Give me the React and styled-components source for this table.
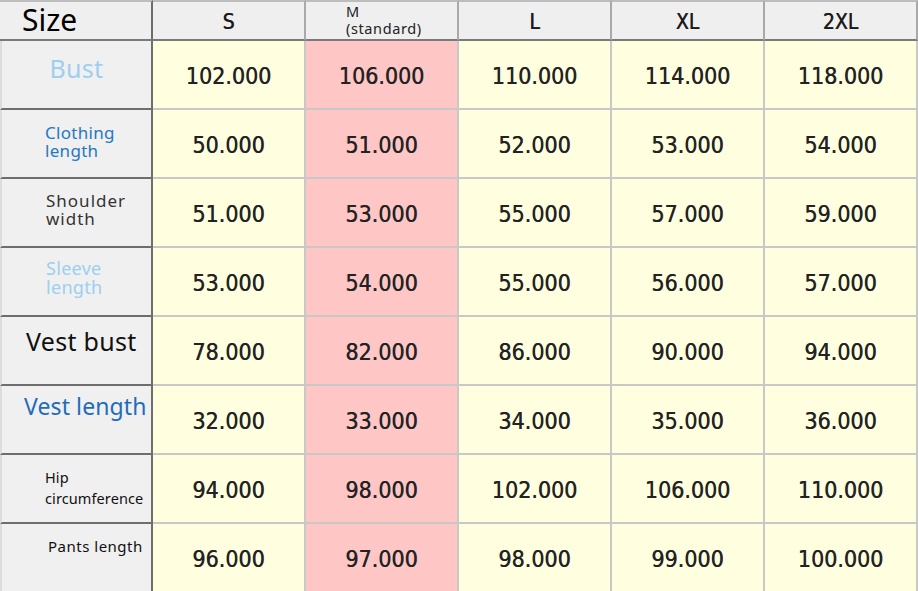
import React from "react";
import styled, { createGlobalStyle } from "styled-components";

const GlobalStyle = createGlobalStyle`
  html, body {
    margin: 0;
    padding: 0;
    background: #ffffff;
  }
  * {
    box-sizing: border-box;
  }
`;

const SIZES = ["S", "M", "L", "XL", "2XL"];

const ROWS = [
  { label: "Bust", tone: "sky", size: 25, align: "center", pad: "0 0 0 0", top: 14, values: ["102.000", "106.000", "110.000", "114.000", "118.000"] },
  { label: "Clothing\nlength", tone: "blue", size: 17, pad: "0 0 0 43px", top: 14, values: ["50.000", "51.000", "52.000", "53.000", "54.000"] },
  { label: "Shoulder\nwidth", tone: "dark", size: 17, pad: "0 0 0 44px", top: 13, spacing: 1, values: ["51.000", "53.000", "55.000", "57.000", "59.000"] },
  { label: "Sleeve\nlength", tone: "sky", size: 18, pad: "0 0 0 44px", top: 11, values: ["53.000", "54.000", "55.000", "56.000", "57.000"] },
  { label: "Vest bust", tone: "black", size: 25, pad: "0 0 0 24px", top: 11, values: ["78.000", "82.000", "86.000", "90.000", "94.000"] },
  { label: "Vest length", tone: "royal", size: 23, pad: "0 0 0 22px", top: 8, spacing: 0.1, values: ["32.000", "33.000", "34.000", "35.000", "36.000"] },
  { label: "Hip\ncircumference", tone: "black", size: 14.5, lh: 21, pad: "0 0 0 43px", top: 12, spacing: 0.1, values: ["94.000", "98.000", "102.000", "106.000", "110.000"] },
  { label: "Pants length", tone: "black", size: 15, pad: "0 0 0 46px", top: 14, spacing: 0.5, values: ["96.000", "97.000", "98.000", "99.000", "100.000"] },
];

const TONES = {
  sky: "#9ccff0",
  blue: "#2578c2",
  royal: "#1f6cbc",
  dark: "#333333",
  black: "#111111",
};

const Chart = styled.div`
  display: grid;
  grid-template-columns: 153px repeat(5, 1fr);
  grid-template-rows: 41px repeat(8, 69px);
  width: 918px;
  height: 591px;
  overflow: hidden;
  background: #ffffe0;
`;

const HeadCell = styled.div`
  display: flex;
  flex-direction: column;
  align-items: ${p => (p.$left ? "flex-start" : "center")};
  justify-content: center;
  background: #efefef;
  border-top: 2px solid #bdbdbd;
  border-bottom: 2px solid #7a7a7a;
  border-right: 2px solid ${p => (p.$left ? "#6c6c6c" : "#a9a9a9")};
  color: #1a1a1a;
  font-family: "DejaVu Sans Condensed", "DejaVu Sans", sans-serif;
  font-size: 21px;
  padding-top: 3px;
  text-shadow: 0.4px 0 0 #3a3a3a;
`;

const SizeTitle = styled.span`
  font-family: "Noto Sans", sans-serif;
  font-size: 30px;
  line-height: 32px;
  padding-left: 22px;
  margin-top: -4px;
  color: #000;
  text-shadow: none;
`;

const Standard = styled.span`
  align-self: flex-start;
  padding-left: 40px;
  font-family: "Noto Sans", sans-serif;
  font-size: 14.5px;
  letter-spacing: 0.6px;
  line-height: 17px;
  margin-top: -5px;
  white-space: pre;
  color: #222;
  text-shadow: none;
`;

const LabelCell = styled.div`
  display: flex;
  justify-content: ${p => (p.$align === "center" ? "center" : "flex-start")};
  align-items: flex-start;
  padding: ${p => p.$pad};
  padding-top: ${p => p.$top}px;
  background: #f0f0f0;
  border-left: 2px solid #dcdcdc;
  border-bottom: 2px solid #6e6e6e;
  border-right: 2px solid #6e6e6e;
`;

const Label = styled.span`
  font-family: "Noto Sans", sans-serif;
  font-size: ${p => p.$size}px;
  line-height: ${p => p.$lh || Math.round(p.$size * 1.08)}px;
  letter-spacing: ${p => (p.$spacing != null ? p.$spacing : 0.3)}px;
  color: ${p => TONES[p.$tone]};
  white-space: pre;
`;

const ValueCell = styled.div`
  display: flex;
  align-items: center;
  justify-content: center;
  background: ${p => (p.$highlight ? "#ffc6c6" : "#ffffe0")};
  border-right: 2px solid #c8c8c8;
  border-bottom: 2px solid #c8c8c8;
  font-family: "DejaVu Sans Condensed", "DejaVu Sans", sans-serif;
  font-size: 23px;
  color: #222222;
  padding-top: 2px;
  text-shadow: 0.4px 0 0 #3a3a3a;
`;

export default function App() {
  return (
    <>
      <GlobalStyle />
      <Chart>
        <HeadCell $left>
          <SizeTitle>Size</SizeTitle>
        </HeadCell>
        {SIZES.map(s =>
          s === "M" ? (
            <HeadCell key={s}>
              <Standard>{"M\n(standard)"}</Standard>
            </HeadCell>
          ) : (
            <HeadCell key={s}>{s}</HeadCell>
          )
        )}
        {ROWS.map(row => (
          <React.Fragment key={row.label}>
            <LabelCell $align={row.align} $pad={row.pad} $top={row.top}>
              <Label $size={row.size} $tone={row.tone} $lh={row.lh} $spacing={row.spacing}>
                {row.label}
              </Label>
            </LabelCell>
            {row.values.map((v, i) => (
              <ValueCell key={i} $highlight={i === 1}>
                {v}
              </ValueCell>
            ))}
          </React.Fragment>
        ))}
      </Chart>
    </>
  );
}
